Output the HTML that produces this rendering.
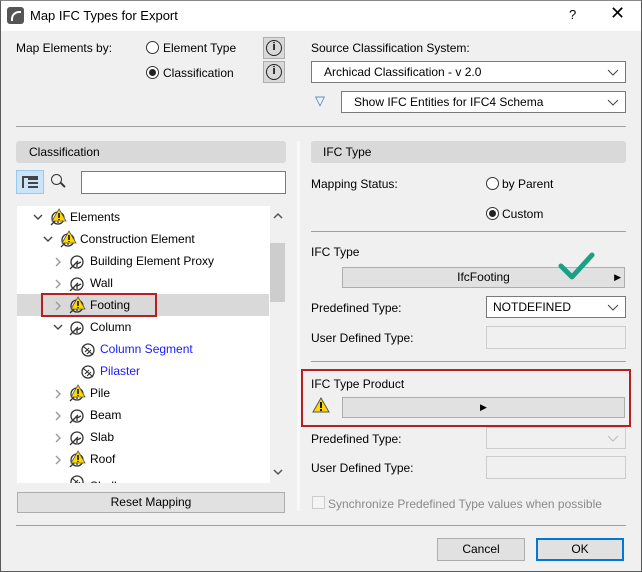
<!DOCTYPE html>
<html><head><style>
*{box-sizing:border-box;margin:0;padding:0}
body{width:642px;height:572px;background:#f0f0f0;font-family:"Liberation Sans",sans-serif;font-size:12px;color:#000;position:relative;overflow:hidden}
.a{position:absolute}
.win{position:absolute;left:0;top:0;width:642px;height:572px;border:1px solid #5a5a5a;border-top:1px solid #888}
.title{left:1px;top:1px;width:640px;height:30px;background:#fff}
.btn{background:#e1e1e1;border:1px solid #adadad;text-align:center}
.sel{background:#fff;border:1px solid #7a7a7a}
.chev{position:absolute;right:6px;top:7px;width:12px;height:7px}
.hdr{background:#d9d9d9;border-radius:3px;height:22px;line-height:22px;padding-left:12px}
.radio{width:13px;height:13px;border:1px solid #333;border-radius:50%;background:#fff}
.radio.on::after{content:"";position:absolute;left:2px;top:2px;width:7px;height:7px;border-radius:50%;background:#222}
.row{position:absolute;left:17px;width:252px;height:22px;line-height:22px}
.row span.t{position:absolute}
.blue{color:#1a1aff}
.line{background:#a0a0a0;height:1px}
</style></head><body>
<div class="win"></div>
<div class="a title"></div>
<div class="a" style="left:7px;top:7px;width:17px;height:17px;background:#555;border-radius:3px"></div>
<div class="a" style="left:11px;top:11px;width:10px;height:10px;border:2px solid #fff;border-right:none;border-bottom:none;border-radius:8px 0 0 0"></div>
<div class="a" style="left:30px;top:8px;font-size:13px">Map IFC Types for Export</div>
<div class="a" style="left:569px;top:7px;font-size:13px">?</div>
<div class="a" style="left:610px;top:3px;font-size:18px">✕</div>

<div class="a" style="left:16px;top:41px">Map Elements by:</div>
<div class="a radio" style="left:146px;top:41px"></div>
<div class="a" style="left:163px;top:41px">Element Type</div>
<div class="a radio on" style="left:146px;top:66px"></div>
<div class="a" style="left:163px;top:66px">Classification</div>
<div class="a" style="left:263px;top:37px;width:22px;height:22px;background:#d9d9d9;border:1px solid #adadad"></div>
<div class="a" style="left:266px;top:40px;width:16px;height:16px;border:1.5px solid #222;border-radius:50%;text-align:center;font-size:11px;line-height:13px;font-weight:bold">i</div>
<div class="a" style="left:263px;top:61px;width:22px;height:22px;background:#d9d9d9;border:1px solid #adadad"></div>
<div class="a" style="left:266px;top:64px;width:16px;height:16px;border:1.5px solid #222;border-radius:50%;text-align:center;font-size:11px;line-height:13px;font-weight:bold">i</div>

<div class="a" style="left:311px;top:41px">Source Classification System:</div>
<div class="a sel" style="left:311px;top:61px;width:315px;height:22px;padding:3px 12px">Archicad Classification - v 2.0<svg class="chev" viewBox="0 0 12 7"><path d="M1 1 L6 6 L11 1" fill="none" stroke="#444"/></svg></div>
<div class="a" style="left:315px;top:93px;color:#2a7ad5;font-size:13px">▽</div>
<div class="a sel" style="left:341px;top:91px;width:285px;height:22px;padding:3px 12px">Show IFC Entities for IFC4 Schema<svg class="chev" viewBox="0 0 12 7"><path d="M1 1 L6 6 L11 1" fill="none" stroke="#444"/></svg></div>
<div class="a line" style="left:16px;top:126px;width:610px"></div>

<div class="a hdr" style="left:16px;top:141px;width:270px;padding-left:13px">Classification</div>
<div class="a" style="left:16px;top:170px;width:28px;height:24px;background:#cce4f7;border:1px solid #99c9ef"></div>
<div class="a" style="left:22px;top:176px;width:16px;height:12px;border-left:2px solid #444;border-top:2px solid #444"></div>
<div class="a" style="left:28px;top:178px;width:10px;height:2px;background:#444"></div>
<div class="a" style="left:28px;top:182px;width:10px;height:2px;background:#444"></div>
<div class="a" style="left:28px;top:186px;width:10px;height:2px;background:#444"></div>
<div class="a" style="left:51px;top:174px;width:11px;height:11px;border:1.5px solid #333;border-radius:50%"></div>
<div class="a" style="left:60px;top:184px;width:6px;height:1.5px;background:#333;transform:rotate(45deg)"></div>
<div class="a sel" style="left:81px;top:171px;width:205px;height:23px"></div>

<div class="a" style="left:17px;top:206px;width:253px;height:277px;background:#fff"></div>
<div class="a" style="left:17px;top:294px;width:252px;height:22px;background:#d9d9d9"></div>
<div class="a" style="left:270px;top:243px;width:15px;height:59px;background:#cdcdcd"></div>
<svg class="a" style="left:273px;top:212px" width="10" height="7"><path d="M1 6 L5 2 L9 6" fill="none" stroke="#555" stroke-width="1.5"/></svg>
<svg class="a" style="left:273px;top:469px" width="10" height="7"><path d="M1 1 L5 5 L9 1" fill="none" stroke="#555" stroke-width="1.5"/></svg>

<svg class="a" style="left:0;top:206px" width="270" height="277">
<defs>
<g id="ic"><circle cx="8" cy="8" r="6" fill="none" stroke="#333" stroke-width="1.3"/><path d="M1 15 L9 7 M8 8 V13 M8 10 L12 8" stroke="#333" stroke-width="1.3" fill="none"/></g>
<g id="wr"><path d="M8 0 L15 12 H1 Z" fill="#ffd800" stroke="#555" stroke-width=".8"/><path d="M8 4 V9 M8 10 V11" stroke="#000" stroke-width="1.5"/></g>
<g id="ic2"><circle cx="8" cy="8" r="6" fill="none" stroke="#333" stroke-width="1.3"/><path d="M3 4 L13 13 M5 10 L9 6 M7 12 L11 8" stroke="#333" stroke-width="1.1"/></g>
</defs>
<g fill="none" stroke="#444" stroke-width="1.4"><path d="M34 9 l4 4 l4 -4"/><path d="M44 31 l4 4 l4 -4"/><path d="M54 119 l4 4 l4 -4"/></g>
<g fill="none" stroke="#999" stroke-width="1.4"><path d="M56 52 l4 4 l-4 4 M56 74 l4 4 l-4 4 M56 96 l4 4 l-4 4 M56 184 l4 4 l-4 4 M56 206 l4 4 l-4 4 M56 228 l4 4 l-4 4 M56 250 l4 4 l-4 4"/></g>
<use href="#ic" x="50" y="4"/><use href="#wr" x="51" y="3"/>
<use href="#ic" x="60" y="26"/><use href="#wr" x="61" y="25"/>
<use href="#ic" x="69" y="48"/><use href="#ic" x="69" y="70"/>
<use href="#ic" x="69" y="92"/><use href="#wr" x="70" y="91"/>
<use href="#ic" x="69" y="114"/>
<use href="#ic2" x="80" y="136"/><use href="#ic2" x="80" y="158"/>
<use href="#ic" x="69" y="180"/><use href="#wr" x="70" y="179"/>
<use href="#ic" x="69" y="202"/><use href="#ic" x="69" y="224"/>
<use href="#ic" x="69" y="246"/><use href="#wr" x="70" y="245"/>
<use href="#ic2" x="69" y="268"/>
<text x="90" y="284" font-family="Liberation Sans" font-size="12">Shell</text>
</svg>
<div class="row" style="top:206px"><span class="t" style="left:53px">Elements</span></div>
<div class="row" style="top:228px"><span class="t" style="left:63px">Construction Element</span></div>
<div class="row" style="top:250px"><span class="t" style="left:73px">Building Element Proxy</span></div>
<div class="row" style="top:272px"><span class="t" style="left:73px">Wall</span></div>
<div class="row" style="top:294px"><span class="t" style="left:73px">Footing</span></div>
<div class="row" style="top:316px"><span class="t" style="left:73px">Column</span></div>
<div class="row" style="top:338px"><span class="t blue" style="left:83px">Column Segment</span></div>
<div class="row" style="top:360px"><span class="t blue" style="left:83px">Pilaster</span></div>
<div class="row" style="top:382px"><span class="t" style="left:73px">Pile</span></div>
<div class="row" style="top:404px"><span class="t" style="left:73px">Beam</span></div>
<div class="row" style="top:426px"><span class="t" style="left:73px">Slab</span></div>
<div class="row" style="top:448px"><span class="t" style="left:73px">Roof</span></div>
<div class="a" style="left:41px;top:293px;width:116px;height:24px;border:2px solid #b22222"></div>

<div class="a btn" style="left:17px;top:492px;width:268px;height:21px;line-height:19px">Reset Mapping</div>

<div class="a" style="left:297px;top:141px;width:3px;height:370px;background:#f8f8f8"></div>
<div class="a hdr" style="left:311px;top:141px;width:315px">IFC Type</div>
<div class="a" style="left:311px;top:177px">Mapping Status:</div>
<div class="a radio" style="left:486px;top:177px"></div>
<div class="a" style="left:502px;top:177px">by Parent</div>
<div class="a radio on" style="left:486px;top:207px"></div>
<div class="a" style="left:502px;top:207px">Custom</div>
<div class="a line" style="left:311px;top:231px;width:315px"></div>
<div class="a" style="left:311px;top:245px">IFC Type</div>
<div class="a btn" style="left:342px;top:267px;width:283px;height:21px;line-height:19px">IfcFooting<span style="position:absolute;right:3px;font-size:9px">▶</span></div>
<svg class="a" style="left:555px;top:248px" width="45" height="35"><path d="M6 18 L17 29 L37 7" fill="none" stroke="#1aa087" stroke-width="5" stroke-linecap="round" stroke-linejoin="round"/></svg>
<div class="a" style="left:311px;top:301px">Predefined Type:</div>
<div class="a sel" style="left:486px;top:296px;width:140px;height:22px;padding:3px 6px">NOTDEFINED<svg class="chev" viewBox="0 0 12 7"><path d="M1 1 L6 6 L11 1" fill="none" stroke="#444"/></svg></div>
<div class="a" style="left:311px;top:331px">User Defined Type:</div>
<div class="a" style="left:486px;top:326px;width:140px;height:23px;border:1px solid #ccc"></div>
<div class="a line" style="left:311px;top:361px;width:315px"></div>
<div class="a" style="left:301px;top:369px;width:330px;height:58px;border:2px solid #b22222"></div>
<div class="a" style="left:311px;top:377px">IFC Type Product</div>
<svg class="a" style="left:312px;top:397px" width="18" height="16"><path d="M9 1 L17 15 H1 Z" fill="#ffd800" stroke="#555"/><path d="M9 5 V11 M9 12 V14" stroke="#000" stroke-width="1.8"/></svg>
<div class="a btn" style="left:342px;top:397px;width:283px;height:21px;font-size:9px;line-height:19px">▶</div>
<div class="a" style="left:311px;top:432px">Predefined Type:</div>
<div class="a" style="left:486px;top:427px;width:140px;height:22px;border:1px solid #ccc"><svg class="chev" viewBox="0 0 12 7"><path d="M1 1 L6 6 L11 1" fill="none" stroke="#bbb"/></svg></div>
<div class="a" style="left:311px;top:461px">User Defined Type:</div>
<div class="a" style="left:486px;top:456px;width:140px;height:23px;border:1px solid #ccc"></div>
<div class="a" style="left:312px;top:496px;width:13px;height:13px;border:1px solid #ccc;background:#f4f4f4"></div>
<div class="a" style="left:328px;top:497px;color:#8a8a8a">Synchronize Predefined Type values when possible</div>

<div class="a line" style="left:16px;top:525px;width:610px"></div>
<div class="a btn" style="left:437px;top:538px;width:88px;height:23px;line-height:21px">Cancel</div>
<div class="a btn" style="left:536px;top:538px;width:88px;height:23px;line-height:19px;border:2px solid #0078d7">OK</div>
</body></html>
